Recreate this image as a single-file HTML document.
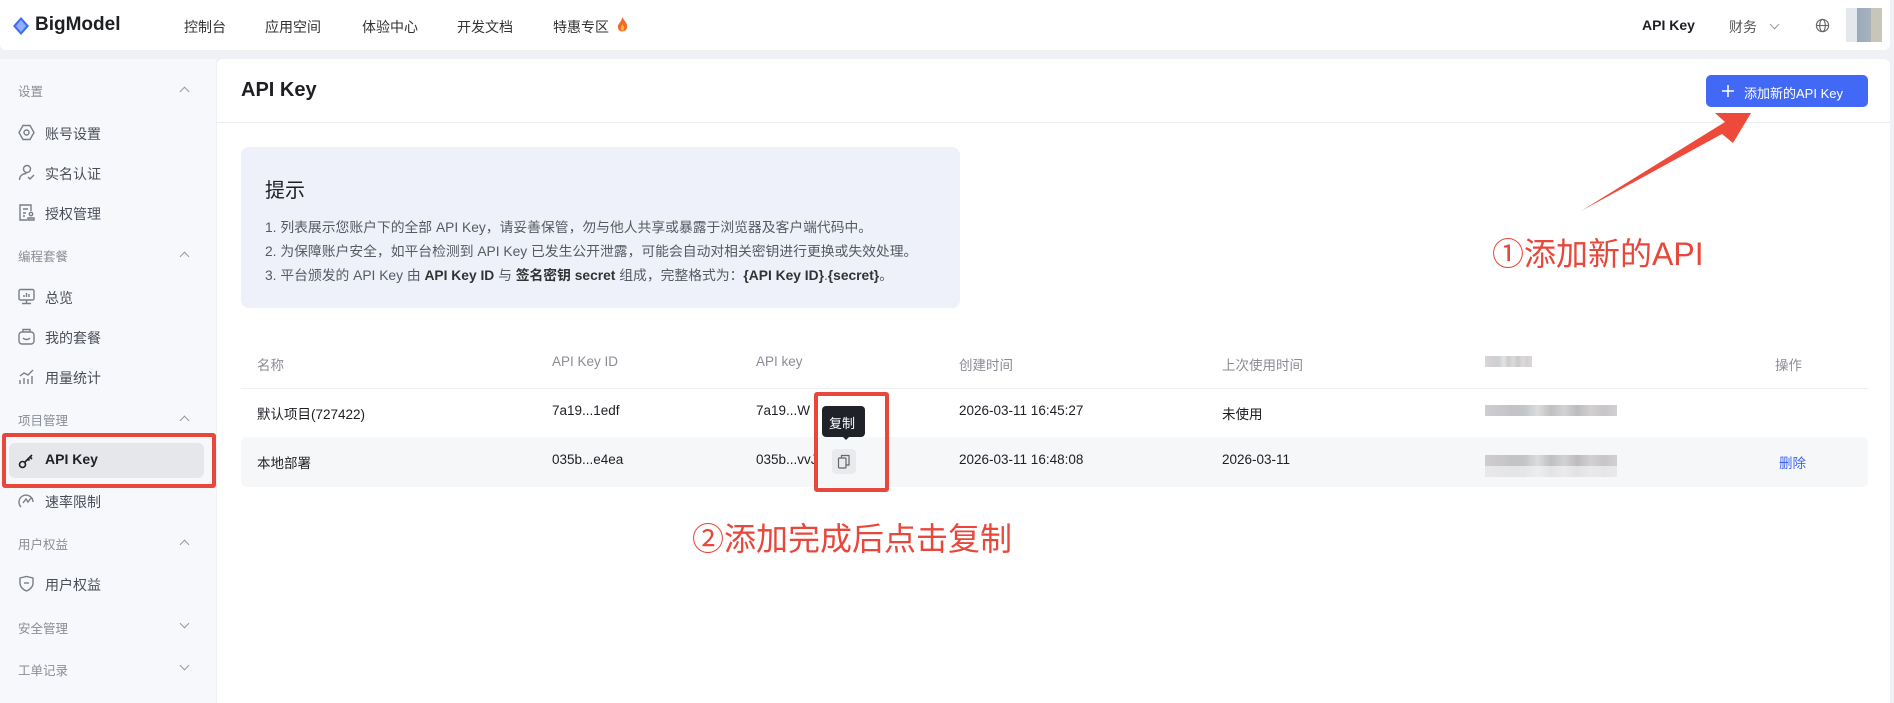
<!DOCTYPE html>
<html><head><meta charset="utf-8"><style>
*{margin:0;padding:0;box-sizing:border-box}
body{width:1894px;height:703px;background:#f0f1f5;font-family:"Liberation Sans","Noto Sans CJK SC",sans-serif;position:relative;overflow:hidden;color:#1d1f24}
.a{position:absolute;white-space:nowrap}
.nav{position:absolute;left:0;top:0;width:1890px;height:50px;background:#fff;border-radius:0 0 6px 6px}
.side{position:absolute;left:0;top:59px;width:216px;height:644px;background:#f7f8fb}
.main{position:absolute;left:217px;top:59px;width:1673px;height:644px;background:#fff;border-radius:6px 6px 0 0}
.sh{font-size:12.5px;color:#8a8d96}
.si{font-size:14px;color:#4a4e58}
.chev{width:7px;height:7px;border-left:1.3px solid #999;border-top:1.3px solid #999;position:absolute}
.th{font-size:13.5px;color:#8a8d96}
.td{font-size:13.5px;color:#1d1f24}
.tip{font-size:13.8px;color:#555a63}
.blur{position:absolute;background:linear-gradient(90deg,#cfcdd0,#c4c3c6 20%,#c2c6c8 30%,#dcdcdc 40%,#c0bfc1 50%,#d2d2d4 60%,#bdbbbd 70%,#d2d0d0 80%,#c9c5c8 90%,#d0d0d2);height:11px}
.red{color:#e8473b;font-size:32px}
</style></head><body>
<div class="nav"></div>
<svg class="a" style="left:12px;top:17px" width="18" height="18" viewBox="0 0 18 18"><path d="M9 0 L17 9 L9 18 L1 9Z" fill="#3f6bf6"/><path d="M9 3 L14 9 L9 15 L4 9Z" fill="#8fb0ff"/></svg>
<div class="a" style="left:35px;top:14px;font-size:19px;font-weight:bold;color:#1d1f24">BigModel</div>
<div class="a" style="left:184px;top:17px;font-size:14px;color:#333">控制台</div>
<div class="a" style="left:265px;top:17px;font-size:14px;color:#333">应用空间</div>
<div class="a" style="left:362px;top:17px;font-size:14px;color:#333">体验中心</div>
<div class="a" style="left:457px;top:17px;font-size:14px;color:#333">开发文档</div>
<div class="a" style="left:553px;top:17px;font-size:14px;color:#333">特惠专区</div>
<svg class="a" style="left:617px;top:17px" width="11" height="16" viewBox="0 0 11 16"><path d="M5.5 0C7 4 11 6 10 11C9 15 2 16 1 11C0 7 4 6 5.5 0Z" fill="#f06a2a"/><path d="M5.5 7C7 10 8 12 5.5 14C3 12 4 10 5.5 7Z" fill="#ffb340"/></svg>
<div class="a" style="left:1642px;top:17px;font-size:14px;font-weight:bold">API Key</div>
<div class="a" style="left:1729px;top:17px;font-size:14px;color:#555">财务</div>
<div class="chev" style="left:1771px;top:21px;transform:rotate(225deg)"></div>
<svg class="a" style="left:1815px;top:18px" width="15" height="15" viewBox="0 0 16 16" fill="none" stroke="#666" stroke-width="1.2"><circle cx="8" cy="8" r="6.5"/><ellipse cx="8" cy="8" rx="3" ry="6.5"/><path d="M1.5 8h13"/></svg>
<div class="a" style="left:1846px;top:8px;width:36px;height:34px;background:linear-gradient(90deg,#e4e7ec 30%,#9aaabb 30%,#a8b2bb 70%,#c7c6b8 70%)"></div>

<div class="side"></div>
<div class="main"></div>
<!-- sidebar -->
<div class="a sh" style="left:18px;top:81px">设置</div><div class="chev" style="left:181px;top:88px;transform:rotate(45deg)"></div>
<svg class="a" style="left:18px;top:124px" width="17" height="17" viewBox="0 0 17 17" fill="none" stroke="#7a7e88" stroke-width="1.4"><path d="M5 1.5h7l4 7-4 7H5l-4-7z"/><circle cx="8.5" cy="8.5" r="2.5"/></svg>
<div class="a si" style="left:45px;top:124px">账号设置</div>
<svg class="a" style="left:18px;top:164px" width="17" height="17" viewBox="0 0 17 17" fill="none" stroke="#7a7e88" stroke-width="1.4"><circle cx="9" cy="5" r="3.5"/><path d="M1.5 16c0-4 3-6.5 7-6.5M10 13l2 2 4-4"/></svg>
<div class="a si" style="left:45px;top:164px">实名认证</div>
<svg class="a" style="left:18px;top:204px" width="17" height="17" viewBox="0 0 17 17" fill="none" stroke="#7a7e88" stroke-width="1.4"><path d="M9 16H2V1h11v6M5 5h5M5 9h3M5 12h2"/><circle cx="13" cy="10" r="1.7"/><path d="M10 16v-2h6v2z"/></svg>
<div class="a si" style="left:45px;top:204px">授权管理</div>
<div class="a sh" style="left:18px;top:246px">编程套餐</div><div class="chev" style="left:181px;top:253px;transform:rotate(45deg)"></div>
<svg class="a" style="left:18px;top:288px" width="17" height="17" viewBox="0 0 17 17" fill="none" stroke="#7a7e88" stroke-width="1.4"><rect x="1" y="1.5" width="15" height="10.5" rx="1.5"/><path d="M8.5 12v3M4 15.5h9M6 9V7M8.5 9V5M11 9V6"/></svg>
<div class="a si" style="left:45px;top:288px">总览</div>
<svg class="a" style="left:18px;top:328px" width="17" height="17" viewBox="0 0 17 17" fill="none" stroke="#7a7e88" stroke-width="1.4"><rect x="1" y="4" width="15" height="12" rx="3"/><path d="M5 4V1.5h7V4M5 10c2 2 5 2 7 0"/></svg>
<div class="a si" style="left:45px;top:328px">我的套餐</div>
<svg class="a" style="left:18px;top:368px" width="17" height="17" viewBox="0 0 17 17" fill="none" stroke="#7a7e88" stroke-width="1.4"><path d="M2 16v-4M6 16v-6M10 16v-5M14 16V8M2 8l4-3 4 2 5-5"/></svg>
<div class="a si" style="left:45px;top:368px">用量统计</div>
<div class="a sh" style="left:18px;top:410px">项目管理</div><div class="chev" style="left:181px;top:417px;transform:rotate(45deg)"></div>
<div class="a" style="left:9px;top:443px;width:195px;height:35px;background:#e6e7eb;border-radius:6px"></div>
<svg class="a" style="left:18px;top:452px" width="17" height="17" viewBox="0 0 17 17" fill="none" stroke="#1d1f24" stroke-width="1.6"><circle cx="4.5" cy="12.5" r="3"/><path d="M7 10l7-7M12 5l2 2M10 7l1.5 1.5"/></svg>
<div class="a" style="left:45px;top:451px;font-size:14px;font-weight:bold">API Key</div>
<div class="a" style="left:2px;top:433px;width:214px;height:55px;border:4px solid #e8473b;border-radius:3px"></div>
<svg class="a" style="left:18px;top:492px" width="17" height="17" viewBox="0 0 17 17" fill="none" stroke="#7a7e88" stroke-width="1.4"><path d="M3 15A7 7 0 1 1 15 10"/><path d="M5 11l3-4 2 3 3-4"/></svg>
<div class="a si" style="left:45px;top:492px">速率限制</div>
<div class="a sh" style="left:18px;top:534px">用户权益</div><div class="chev" style="left:181px;top:541px;transform:rotate(45deg)"></div>
<svg class="a" style="left:18px;top:575px" width="17" height="17" viewBox="0 0 17 17" fill="none" stroke="#7a7e88" stroke-width="1.4"><path d="M2 3l6.5-1.5L15 3v5c0 4-3.5 7-6.5 8C5.5 15 2 12 2 8z"/><path d="M6 8h5"/></svg>
<div class="a si" style="left:45px;top:575px">用户权益</div>
<div class="a sh" style="left:18px;top:618px">安全管理</div><div class="chev" style="left:181px;top:620px;transform:rotate(225deg)"></div>
<div class="a sh" style="left:18px;top:660px">工单记录</div><div class="chev" style="left:181px;top:662px;transform:rotate(225deg)"></div>

<!-- main -->
<div class="a" style="left:241px;top:79px;font-size:20px;font-weight:bold">API Key</div>
<div class="a" style="left:217px;top:122px;width:1673px;height:1px;background:#ebecef"></div>
<div class="a" style="left:1706px;top:75px;width:162px;height:32px;background:#4269f6;border-radius:5px"></div>
<svg class="a" style="left:1722px;top:85px" width="12" height="12" viewBox="0 0 12 12" stroke="#fff" stroke-width="1.5"><path d="M6 0v12M0 6h12"/></svg>
<div class="a" style="left:1744px;top:83px;font-size:13px;color:#fff">添加新的API Key</div>

<div class="a" style="left:241px;top:147px;width:719px;height:161px;background:#eef1fa;border-radius:8px"></div>
<div class="a" style="left:265px;top:174px;font-size:20px;color:#1d1f24">提示</div>
<div class="a tip" style="left:265px;top:216px">1. 列表展示您账户下的全部 API Key，请妥善保管，勿与他人共享或暴露于浏览器及客户端代码中。</div>
<div class="a tip" style="left:265px;top:240px">2. 为保障账户安全，如平台检测到 API Key 已发生公开泄露，可能会自动对相关密钥进行更换或失效处理。</div>
<div class="a tip" style="left:265px;top:264px">3. 平台颁发的 API Key 由 <b style="color:#333">API Key ID</b> 与 <b style="color:#333">签名密钥 secret</b> 组成，完整格式为：<b style="color:#333">{API Key ID}</b>.<b style="color:#333">{secret}</b>。</div>

<!-- table -->
<div class="a th" style="left:257px;top:354px">名称</div>
<div class="a th" style="left:552px;top:354px">API Key ID</div>
<div class="a th" style="left:756px;top:354px">API key</div>
<div class="a th" style="left:959px;top:354px">创建时间</div>
<div class="a th" style="left:1222px;top:354px">上次使用时间</div>
<div class="blur" style="left:1485px;top:356px;width:47px;opacity:.8"></div>
<div class="a th" style="left:1775px;top:354px">操作</div>
<div class="a" style="left:241px;top:388px;width:1627px;height:1px;background:#f0f1f3"></div>
<div class="a td" style="left:257px;top:403px">默认项目(727422)</div>
<div class="a td" style="left:552px;top:403px">7a19...1edf</div>
<div class="a td" style="left:756px;top:403px">7a19...W</div>
<div class="a td" style="left:959px;top:403px">2026-03-11 16:45:27</div>
<div class="a td" style="left:1222px;top:403px">未使用</div>
<div class="blur" style="left:1485px;top:405px;width:132px"></div>
<div class="a" style="left:241px;top:437px;width:1627px;height:50px;background:#f6f7f9;border-radius:6px"></div>
<div class="a td" style="left:257px;top:452px">本地部署</div>
<div class="a td" style="left:552px;top:452px">035b...e4ea</div>
<div class="a td" style="left:756px;top:452px">035b...vvJ</div>
<div class="a" style="left:832px;top:449px;width:24px;height:25px;background:#e9eaee;border-radius:4px"></div>
<svg class="a" style="left:837px;top:454px" width="14" height="15" viewBox="0 0 14 15" fill="none" stroke="#666" stroke-width="1.2"><rect x="1.5" y="4" width="7.5" height="10" rx="1"/><path d="M4.5 4V1.5h7.5v9.5H9"/></svg>
<div class="a td" style="left:959px;top:452px">2026-03-11 16:48:08</div>
<div class="a td" style="left:1222px;top:452px">2026-03-11</div>
<div class="blur" style="left:1485px;top:455px;width:132px"></div>
<div class="blur" style="left:1485px;top:466px;width:132px;opacity:.35"></div>
<div class="a" style="left:1779px;top:452px;font-size:13.5px;color:#3d63f5">删除</div>

<!-- tooltip -->
<div class="a" style="left:822px;top:406px;width:43px;height:31px;background:#1f2329;border-radius:4px"></div>
<div class="a" style="left:841px;top:435px;width:0;height:0;border-left:5px solid transparent;border-right:5px solid transparent;border-top:5px solid #1f2329"></div>
<div class="a" style="left:829px;top:413px;font-size:13px;color:#fff">复制</div>
<div class="a" style="left:814px;top:392px;width:75px;height:100px;border:4px solid #e8473b;border-radius:3px"></div>

<!-- annotations -->
<svg class="a" style="left:1570px;top:100px" width="200" height="120" viewBox="1570 100 200 120"><path d="M1581 211 L1722 134 L1733 143 L1751 113 L1715 113 L1725 122 Z" fill="#ee4a3c"/></svg>
<div class="a red" style="left:1492px;top:229px">①添加新的API</div>
<div class="a red" style="left:692px;top:514px">②添加完成后点击复制</div>
</body></html>
